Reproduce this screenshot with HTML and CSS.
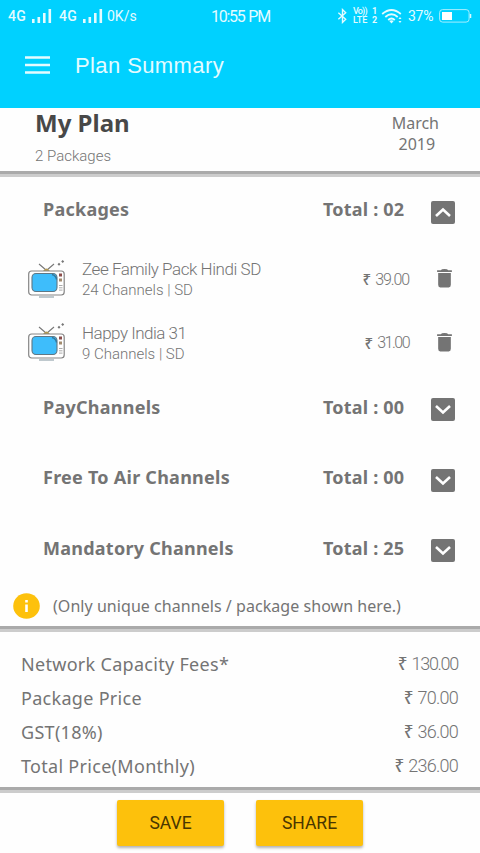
FILE: index.html
```html
<!DOCTYPE html>
<html lang="en">
<head>
<meta charset="utf-8">
<title>Plan Summary</title>
<link rel="stylesheet" href="styles.css">
</head>
<body>
<svg class="defs" width="0" height="0">
  <symbol id="signal" viewBox="0 0 20 14"><path d="M0 10h2.600v4H0zM5.500 8h2.600v6h-2.600zM11 4h2.600v10H11zM16.500 0h2.600v14h-2.600z" fill="currentColor"/></symbol>
  <symbol id="tv" viewBox="0 0 38 39">
    <path d="M11 4l7 6M26 4l-7 6" stroke="#777" stroke-width="1.100" fill="none"/>
    <path d="M15 11q3.500-5 7 0z" fill="#b39a52"/>
    <rect x=".7" y="11" width="35.500" height="24" rx="3" fill="#fff" stroke="#858585" stroke-width="1.200"/>
    <rect x="4" y="13.500" width="25" height="18" rx="4" fill="#3ebdfb" stroke="#607784" stroke-width="1.100"/>
    <path d="M24 14.500q4 1 4.500 5" stroke="#36799d" stroke-width="1.500" fill="none"/>
    <path d="M31 13.500h3v3h-3z" fill="#8b4d4b"/><path d="M31 18.500h3v3h-3z" fill="#a28b6e"/>
    <path d="M31 25.500h3.500M31 27.800h3.500M31 30.100h3.500" stroke="#aaa"/>
    <path d="M11 37h15" stroke="#94a5ad" stroke-width="1.200"/>
    <path d="M31 2.700l1.500 1.500L31 5.700l-1.500-1.500zM34.700 0l1.500 1.500-1.500 1.500-1.500-1.500z" fill="#777"/>
  </symbol>
  <symbol id="trash" viewBox="0 0 16 18"><path d="M1 1.300h3.500Q5 0 8 0t3.500 1.300H15v1.600H1zM2 3.800h12V15q0 2.500-2 2.500H4Q2 17.500 2 15z" fill="#747474"/></symbol>
  <symbol id="up" viewBox="0 0 24 23"><rect width="24" height="23" rx="2" fill="#747474"/><path d="M5 15l7-6.500 7 6.500" fill="none" stroke="#fff" stroke-width="2.600"/></symbol>
  <symbol id="down" viewBox="0 0 24 23"><rect width="24" height="23" rx="2" fill="#747474"/><path d="M5 8l7 6.500L19 8" fill="none" stroke="#fff" stroke-width="2.600"/></symbol>
</svg>

<header class="appbar">
  <div class="status">
    <div class="network"><span class="gen">4G</span><svg class="signal"><use href="#signal"/></svg><span class="gen second">4G</span><svg class="signal"><use href="#signal"/></svg><span class="speed">0K/s</span></div>
    <span class="clock">10:55 PM</span>
    <div class="device">
      <svg class="bluetooth" viewBox="0 0 12 16"><path d="M1.500 4.500l8 7L6 15V1l3.500 3.500-8 7" fill="none" stroke="currentColor" stroke-width="1.500"/></svg>
      <div class="volte"><div class="volte-text"><span class="vo">Vo))</span><span>LTE</span></div><div class="sims"><span>1</span><span>2</span></div></div>
      <svg class="wifi" viewBox="0 0 22 15"><g fill="none" stroke="currentColor" stroke-width="1.800"><path d="M.7 5Q10 -3 19.300 5M3.800 8Q10 2.500 16.200 8M6.700 11Q10 8 13.300 11"/></g><path d="M7.800 12q2.200-1.500 4.400 0L10 14.500zM17 10l1.500-2L20 10zM17 12l1.500 2 1.500-2z" fill="currentColor"/></svg>
      <span class="percent">37%</span>
      <svg class="battery" viewBox="0 0 33 14"><rect x=".6" y=".6" width="29.500" height="12.500" rx="3" fill="none" stroke="#a5eeff" stroke-width="1"/><path d="M3 3h10v8H3z" fill="#fff"/><path d="M31.500 5v4" stroke="#d8f8ff" stroke-width="1.500"/></svg>
    </div>
  </div>
  <div class="toolbar">
    <svg class="menu" viewBox="0 0 25 18"><path d="M0 1.500h25M0 9h25M0 16.500h25" stroke="currentColor" stroke-width="2.400"/></svg>
    <h1>Plan Summary</h1>
  </div>
</header>

<main>
  <section class="plan">
    <div><h2>My Plan</h2><p class="count">2 Packages</p></div>
    <div class="month"><span>March</span><span class="year">2019</span></div>
  </section>
  <section class="groups">
    <div class="group"><h3>Packages</h3><span class="total">Total : 02</span><svg class="toggle"><use href="#up"/></svg></div>
    <div class="package">
      <svg class="tv"><use href="#tv"/></svg>
      <div class="info"><span class="name">Zee Family Pack Hindi SD</span><span class="detail">24 Channels | SD</span></div>
      <span class="price"><b>₹</b><span>39.00</span></span><svg class="trash"><use href="#trash"/></svg>
    </div>
    <div class="package">
      <svg class="tv"><use href="#tv"/></svg>
      <div class="info"><span class="name tight">Happy India 31</span><span class="detail">9 Channels | SD</span></div>
      <span class="price"><b>₹</b><span class="tight">31.00</span></span><svg class="trash"><use href="#trash"/></svg>
    </div>
    <div class="group"><h3>PayChannels</h3><span class="total">Total : 00</span><svg class="toggle"><use href="#down"/></svg></div>
    <div class="group"><h3>Free To Air Channels</h3><span class="total">Total : 00</span><svg class="toggle"><use href="#down"/></svg></div>
    <div class="group"><h3>Mandatory Channels</h3><span class="total">Total : 25</span><svg class="toggle"><use href="#down"/></svg></div>
    <div class="note"><svg class="infoicon" viewBox="0 0 27 26"><ellipse cx="13.500" cy="13" rx="13.300" ry="12.700" fill="#fdc10c"/><path d="M12.200 7h2.600v2.600h-2.600zM12.200 11.500h2.600V19h-2.600z" fill="#fff"/></svg><span>(Only unique channels / package shown here.)</span></div>
  </section>
  <section class="costs">
    <div class="cost"><span>Network Capacity Fees*</span><span class="amount"><b>₹</b><span class="tight">130.00</span></span></div>
    <div class="cost"><span>Package Price</span><span class="amount"><b>₹</b><span>70.00</span></span></div>
    <div class="cost"><span>GST(18%)</span><span class="amount"><b>₹</b><span>36.00</span></span></div>
    <div class="cost"><span>Total Price(Monthly)</span><span class="amount"><b>₹</b><span>236.00</span></span></div>
  </section>
  <div class="actions"><button>SAVE</button><button>SHARE</button></div>
</main>
</body>
</html>
```
FILE: styles.css
```css
* { box-sizing: border-box; }
body { margin: 0; width: 480px; height: 853px; overflow: hidden; background: #fefefe; color: #747474; font-family: "Noto Sans", sans-serif; }
h1, h2, h3, p { margin: 0; }
svg { display: block; flex: none; }
.defs { position: absolute; }
span { white-space: nowrap; }

.appbar { height: 108px; background: #00d1ff; color: #e4fbff; }
.status { height: 32px; display: grid; grid-template-columns: 211px 126px 1fr; align-items: center; font-family: Roboto, sans-serif; }
.network { display: flex; align-items: center; padding-left: 8px; }
.gen { width: 20px; margin-right: 4px; font: 500 14px/32px Roboto, sans-serif; letter-spacing: .4px; }
.gen.second { margin-left: 7px; }
.signal { width: 20px; height: 14px; }
.speed { margin-left: 4px; font-size: 14px; }
.clock { font-size: 16px; letter-spacing: -1.250px; word-spacing: 1px; }
.device { display: flex; align-items: center; }
.bluetooth { width: 11px; height: 16px; margin-right: 5px; }
.volte { display: flex; width: 25px; margin-right: 3px; font: 500 9px/9px Roboto, sans-serif; }
.volte-text, .sims { display: flex; flex-direction: column; }
.volte-text { width: 18px; }
.vo { letter-spacing: -.8px; }
.sims { padding-left: 1px; font-weight: 700; font-size: 9px; }
.wifi { width: 23px; height: 15px; margin-right: 4px; }
.percent { width: 26px; margin-right: 5px; font-size: 14px; letter-spacing: -.3px; }
.battery { width: 33px; height: 14px; }
.toolbar { height: 66px; display: flex; align-items: center; padding-left: 25px; gap: 25px; }
.menu { width: 25px; height: 18px; }
h1 { padding-top: 1px; font: 400 22px/28px "Liberation Sans", sans-serif; letter-spacing: .4px; }

.plan { height: 69px; display: flex; justify-content: space-between; padding: 0 41px 0 35px; }
.plan, .groups, .costs { border-bottom: 3px solid #ccc; box-shadow: inset 0 -3px #aaa; }
h2 { font-size: 24px; line-height: 30px; color: #484848; letter-spacing: 0; }
.count { margin-top: 7px; font: 300 15px/22px Roboto, sans-serif; }
.month { display: flex; flex-direction: column; align-items: center; padding-top: 5px; font-size: 16px; line-height: 21px; }
.year { margin-right: -3px; }

.groups { height: 455px; }
.group { height: 70.500px; display: flex; align-items: center; padding: 0 25px 0 43px; font-size: 18px; font-weight: 700; letter-spacing: .2px; }
.group h3 { flex: 1; font-size: 18px; line-height: 24px; padding-bottom: 6px; letter-spacing: .25px; }
.total { width: 83px; margin-right: 25px; padding-bottom: 6px; line-height: 24px; }
.toggle { width: 24px; height: 23px; }
.package { height: 63.500px; display: flex; align-items: center; padding: 0 27px 0 28px; font-family: Roboto, sans-serif; font-weight: 300; }
.tv { width: 38px; height: 39px; }
.info { flex: 1; display: flex; flex-direction: column; margin-left: 16px; padding-top: 1px; }
.name { font-size: 17px; line-height: 22px; letter-spacing: -.450px; }
.name.tight { letter-spacing: -.5px; }
.detail { font-size: 15px; line-height: 21px; }
.price, .amount { display: flex; align-items: center; gap: 4px; }
.price { margin-right: 27px; font-size: 16px; letter-spacing: -1.100px; }
.price .tight { letter-spacing: -1.500px; }
.price b, .amount b { font-family: "Noto Sans", sans-serif; font-weight: 500; font-size: .95em; line-height: 20px; letter-spacing: 0; }
.trash { width: 17px; height: 19px; margin-bottom: 1px; }
.note { display: flex; align-items: center; height: 40px; padding-left: 13px; gap: 13px; font-size: 16px; letter-spacing: .05px; }
.infoicon { width: 27px; height: 26px; }

.costs { height: 161px; padding-top: 14.500px; }
.cost { height: 34px; display: flex; align-items: center; justify-content: space-between; padding: 0 22px 0 21px; font-size: 18px; line-height: 24px; letter-spacing: .3px; }
.amount { font-family: Roboto, sans-serif; font-size: 18px; font-weight: 300; letter-spacing: -.750px; }
.amount .tight { letter-spacing: -1.300px; }

.actions { display: flex; gap: 32px; padding: 7px 0 0 117px; }
button { width: 107px; height: 46px; padding: 0; border: 0; border-radius: 2px; background: #fdc10c; color: #493600; font: 400 17.500px Roboto, sans-serif; box-shadow: 0 2px 3px rgba(0, 0, 0, .3); }
```
